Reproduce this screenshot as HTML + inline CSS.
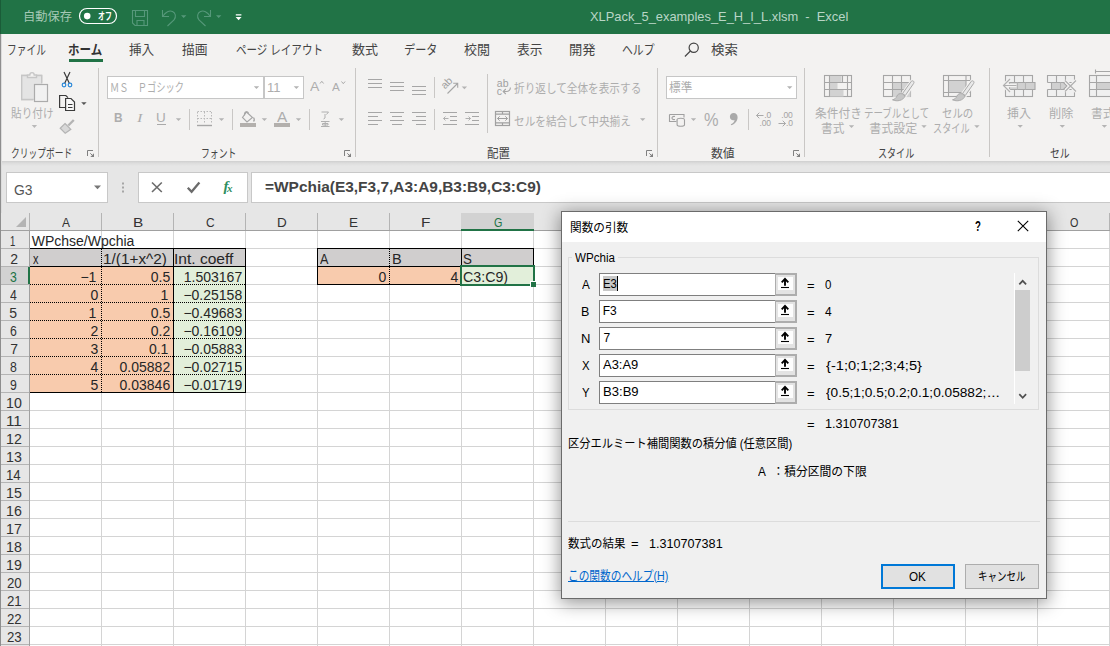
<!DOCTYPE html>
<html lang="ja"><head><meta charset="utf-8"><title>Excel</title>
<style>
*{box-sizing:border-box;margin:0;padding:0}
html,body{width:1110px;height:646px;overflow:hidden;background:#fff}
body{position:relative;font-family:"Liberation Sans","Noto Sans CJK JP",sans-serif;font-size:12px;color:#444}
.a{position:absolute}
.t{position:absolute;white-space:nowrap;line-height:1;transform-origin:0 0}
.vs{position:absolute;width:1px;background:#c9c7c5}
.bx{position:absolute;background:#fff;border:1px solid #c6c6c6}
.gv{position:absolute;top:231px;width:1px;height:415px;background:#d4d4d4}
.gh{position:absolute;left:30px;width:1080px;height:1px;background:#d4d4d4}
.hv{position:absolute;top:213px;width:1px;height:17px;background:#b4b4b4}
.hh{position:absolute;left:1px;width:28px;height:1px;background:#b4b4b4}
.o{position:absolute;background:#f8cbad}
.g{position:absolute;background:#e2efda}
.y{position:absolute;background:#d0cece}
.k{position:absolute;background:#000}
.dv{position:absolute;width:1px;background:repeating-linear-gradient(#000 0 1px,transparent 1px 2px)}
.dh{position:absolute;height:1px;background:repeating-linear-gradient(90deg,#000 0 1px,transparent 1px 2px)}
.in{position:absolute;left:599px;width:177px;height:23px;background:#fff;border:1px solid #7f7f7f}
.ib{position:absolute;left:775px;width:22px;height:23px;background:#e3e3e3;border:solid #adadad;border-width:2px 2px 2px 1px}
</style></head>
<body>
<!-- GRID -->
<div class="gv" style="left:101px"></div><div class="gv" style="left:173px"></div><div class="gv" style="left:245px"></div><div class="gv" style="left:317px"></div><div class="gv" style="left:389px"></div><div class="gv" style="left:461px"></div><div class="gv" style="left:533px"></div><div class="gv" style="left:605px"></div><div class="gv" style="left:677px"></div><div class="gv" style="left:749px"></div><div class="gv" style="left:821px"></div><div class="gv" style="left:893px"></div><div class="gv" style="left:965px"></div><div class="gv" style="left:1037px"></div><div class="gv" style="left:1109px"></div>
<div class="gh" style="top:248px"></div><div class="gh" style="top:266px"></div><div class="gh" style="top:284px"></div><div class="gh" style="top:302px"></div><div class="gh" style="top:320px"></div><div class="gh" style="top:338px"></div><div class="gh" style="top:356px"></div><div class="gh" style="top:374px"></div><div class="gh" style="top:392px"></div><div class="gh" style="top:410px"></div><div class="gh" style="top:428px"></div><div class="gh" style="top:446px"></div><div class="gh" style="top:464px"></div><div class="gh" style="top:482px"></div><div class="gh" style="top:500px"></div><div class="gh" style="top:518px"></div><div class="gh" style="top:536px"></div><div class="gh" style="top:554px"></div><div class="gh" style="top:572px"></div><div class="gh" style="top:590px"></div><div class="gh" style="top:608px"></div><div class="gh" style="top:626px"></div><div class="gh" style="top:644px"></div>
<div class="a" style="left:0;top:213px;width:1110px;height:18px;background:#e6e6e6;border-bottom:1px solid #a0a0a0"></div>
<div class="a" style="left:0;top:231px;width:30px;height:415px;background:#e6e6e6;border-right:1px solid #a0a0a0"></div>
<div class="hv" style="left:29px"></div><div class="hv" style="left:101px"></div><div class="hv" style="left:173px"></div><div class="hv" style="left:245px"></div><div class="hv" style="left:317px"></div><div class="hv" style="left:389px"></div><div class="hv" style="left:461px"></div><div class="hv" style="left:533px"></div><div class="hv" style="left:605px"></div><div class="hv" style="left:677px"></div><div class="hv" style="left:749px"></div><div class="hv" style="left:821px"></div><div class="hv" style="left:893px"></div><div class="hv" style="left:965px"></div><div class="hv" style="left:1037px"></div><div class="hv" style="left:1109px"></div>
<div class="hh" style="top:248px"></div><div class="hh" style="top:266px"></div><div class="hh" style="top:284px"></div><div class="hh" style="top:302px"></div><div class="hh" style="top:320px"></div><div class="hh" style="top:338px"></div><div class="hh" style="top:356px"></div><div class="hh" style="top:374px"></div><div class="hh" style="top:392px"></div><div class="hh" style="top:410px"></div><div class="hh" style="top:428px"></div><div class="hh" style="top:446px"></div><div class="hh" style="top:464px"></div><div class="hh" style="top:482px"></div><div class="hh" style="top:500px"></div><div class="hh" style="top:518px"></div><div class="hh" style="top:536px"></div><div class="hh" style="top:554px"></div><div class="hh" style="top:572px"></div><div class="hh" style="top:590px"></div><div class="hh" style="top:608px"></div><div class="hh" style="top:626px"></div><div class="hh" style="top:644px"></div>
<div class="a" style="left:16px;top:217px;width:0;height:0;border-left:10px solid transparent;border-bottom:10px solid #b4b4b4"></div>
<div class="a" style="left:461px;top:213px;width:73px;height:18px;background:#d2d2d2;border-bottom:2px solid #217346"></div>
<div class="a" style="left:1px;top:267px;width:29px;height:17px;background:#d2d2d2;border-right:2px solid #217346"></div>
<div class="y" style="left:30px;top:249px;width:215px;height:17px"></div><div class="o" style="left:30px;top:267px;width:143px;height:125px"></div><div class="g" style="left:174px;top:267px;width:71px;height:125px"></div><div class="y" style="left:318px;top:249px;width:215px;height:17px"></div><div class="o" style="left:318px;top:267px;width:143px;height:17px"></div><div class="g" style="left:462px;top:267px;width:71px;height:17px"></div>
<div class="t" style="left:61.85px;top:216px;font-size:13px;color:#333;transform:scaleX(0.922);">A</div>
<div class="t" style="left:132.66px;top:216px;font-size:13px;color:#333;transform:scaleX(1.186);">B</div>
<div class="t" style="left:205.85px;top:216px;font-size:13px;color:#333;transform:scaleX(0.922);">C</div>
<div class="t" style="left:276.81px;top:216px;font-size:13px;color:#333;transform:scaleX(1.037);">D</div>
<div class="t" style="left:348.81px;top:216px;font-size:13px;color:#333;transform:scaleX(1.037);">E</div>
<div class="t" style="left:420.66px;top:216px;font-size:13px;color:#333;transform:scaleX(1.186);">F</div>
<div class="t" style="left:493.85px;top:216px;font-size:13px;color:#217346;transform:scaleX(0.830);">G</div>
<div class="t" style="left:564.81px;top:216px;font-size:13px;color:#333;transform:scaleX(1.037);">H</div>
<div class="t" style="left:639.5px;top:216px;font-size:13px;color:#333;transform:scaleX(1.250);">I</div>
<div class="t" style="left:710.75px;top:216px;font-size:13px;color:#333;transform:scaleX(1.083);">J</div>
<div class="t" style="left:780.81px;top:216px;font-size:13px;color:#333;transform:scaleX(1.037);">K</div>
<div class="t" style="left:852.8px;top:216px;font-size:13px;color:#333;transform:scaleX(1.300);">L</div>
<div class="t" style="left:924.19px;top:216px;font-size:13px;color:#333;transform:scaleX(1.056);">M</div>
<div class="t" style="left:996.81px;top:216px;font-size:13px;color:#333;transform:scaleX(1.037);">N</div>
<div class="t" style="left:1069.85px;top:216px;font-size:13px;color:#333;transform:scaleX(0.830);">O</div>
<div class="t" style="left:10.14px;top:234px;font-size:14px;color:#333;transform:scaleX(0.680);">1</div>
<div class="t" style="left:10.2px;top:252px;font-size:14px;color:#333;">2</div>
<div class="t" style="left:10.2px;top:270px;font-size:14px;color:#217346;transform:scaleX(0.875);">3</div>
<div class="t" style="left:10.2px;top:288px;font-size:14px;color:#333;transform:scaleX(0.875);">4</div>
<div class="t" style="left:9.2px;top:306px;font-size:14px;color:#333;">5</div>
<div class="t" style="left:10.2px;top:324px;font-size:14px;color:#333;transform:scaleX(0.875);">6</div>
<div class="t" style="left:10.2px;top:342px;font-size:14px;color:#333;">7</div>
<div class="t" style="left:10.2px;top:360px;font-size:14px;color:#333;transform:scaleX(0.875);">8</div>
<div class="t" style="left:10.2px;top:378px;font-size:14px;color:#333;transform:scaleX(0.875);">9</div>
<div class="t" style="left:6.19px;top:396px;font-size:14px;color:#333;transform:scaleX(1.014);">10</div>
<div class="t" style="left:6.11px;top:414px;font-size:14px;color:#333;transform:scaleX(1.092);">11</div>
<div class="t" style="left:6.19px;top:432px;font-size:14px;color:#333;transform:scaleX(1.014);">12</div>
<div class="t" style="left:6.19px;top:450px;font-size:14px;color:#333;transform:scaleX(1.014);">13</div>
<div class="t" style="left:6.25px;top:468px;font-size:14px;color:#333;transform:scaleX(0.947);">14</div>
<div class="t" style="left:6.19px;top:486px;font-size:14px;color:#333;transform:scaleX(1.014);">15</div>
<div class="t" style="left:6.19px;top:504px;font-size:14px;color:#333;transform:scaleX(1.014);">16</div>
<div class="t" style="left:6.19px;top:522px;font-size:14px;color:#333;transform:scaleX(1.014);">17</div>
<div class="t" style="left:6.19px;top:540px;font-size:14px;color:#333;transform:scaleX(1.014);">18</div>
<div class="t" style="left:6.19px;top:558px;font-size:14px;color:#333;transform:scaleX(1.014);">19</div>
<div class="t" style="left:7.2px;top:576px;font-size:14px;color:#333;transform:scaleX(0.947);">20</div>
<div class="t" style="left:7.2px;top:594px;font-size:14px;color:#333;transform:scaleX(0.947);">21</div>
<div class="t" style="left:7.2px;top:612px;font-size:14px;color:#333;transform:scaleX(0.947);">22</div>
<div class="t" style="left:7.2px;top:630px;font-size:14px;color:#333;transform:scaleX(0.947);">23</div>
<div class="t" style="left:31.7px;top:234px;font-size:14px;color:#262626;">WPchse/Wpchia</div>
<div class="t" style="left:32.5px;top:252px;font-size:14px;color:#262626;transform:scaleX(0.786);">x</div>
<div class="t" style="left:103.1px;top:252px;font-size:14px;color:#262626;transform:scaleX(1.096);">1/(1+x^2)</div>
<div class="t" style="left:174.19px;top:252px;font-size:14px;color:#262626;transform:scaleX(1.111);">Int. coeff</div>
<div class="t" style="left:320px;top:252px;font-size:14px;color:#262626;transform:scaleX(0.900);">A</div>
<div class="t" style="left:391.96px;top:252px;font-size:14px;color:#262626;transform:scaleX(1.038);">B</div>
<div class="t" style="left:462.75px;top:252px;font-size:14px;color:#262626;transform:scaleX(0.950);">S</div>
<div class="t" style="left:-53.6px;width:150px;text-align:right;transform-origin:100% 0;top:270px;font-size:14px;color:#262626;">−1</div>
<div class="t" style="left:20.2px;width:150px;text-align:right;transform-origin:100% 0;top:270px;font-size:14px;color:#262626;">0.5</div>
<div class="t" style="left:92.2px;width:150px;text-align:right;transform-origin:100% 0;top:270px;font-size:14px;color:#262626;">1.503167</div>
<div class="t" style="left:-51.8px;width:150px;text-align:right;transform-origin:100% 0;top:288px;font-size:14px;color:#262626;">0</div>
<div class="t" style="left:18.4px;width:150px;text-align:right;transform-origin:100% 0;top:288px;font-size:14px;color:#262626;">1</div>
<div class="t" style="left:92.2px;width:150px;text-align:right;transform-origin:100% 0;top:288px;font-size:14px;color:#262626;">−0.25158</div>
<div class="t" style="left:-53.6px;width:150px;text-align:right;transform-origin:100% 0;top:306px;font-size:14px;color:#262626;">1</div>
<div class="t" style="left:20.2px;width:150px;text-align:right;transform-origin:100% 0;top:306px;font-size:14px;color:#262626;">0.5</div>
<div class="t" style="left:92.2px;width:150px;text-align:right;transform-origin:100% 0;top:306px;font-size:14px;color:#262626;">−0.49683</div>
<div class="t" style="left:-51.8px;width:150px;text-align:right;transform-origin:100% 0;top:324px;font-size:14px;color:#262626;">2</div>
<div class="t" style="left:20.2px;width:150px;text-align:right;transform-origin:100% 0;top:324px;font-size:14px;color:#262626;">0.2</div>
<div class="t" style="left:92.2px;width:150px;text-align:right;transform-origin:100% 0;top:324px;font-size:14px;color:#262626;">−0.16109</div>
<div class="t" style="left:-51.8px;width:150px;text-align:right;transform-origin:100% 0;top:342px;font-size:14px;color:#262626;">3</div>
<div class="t" style="left:18.4px;width:150px;text-align:right;transform-origin:100% 0;top:342px;font-size:14px;color:#262626;">0.1</div>
<div class="t" style="left:92.2px;width:150px;text-align:right;transform-origin:100% 0;top:342px;font-size:14px;color:#262626;">−0.05883</div>
<div class="t" style="left:-51.8px;width:150px;text-align:right;transform-origin:100% 0;top:360px;font-size:14px;color:#262626;">4</div>
<div class="t" style="left:20.2px;width:150px;text-align:right;transform-origin:100% 0;top:360px;font-size:14px;color:#262626;">0.05882</div>
<div class="t" style="left:92.2px;width:150px;text-align:right;transform-origin:100% 0;top:360px;font-size:14px;color:#262626;">−0.02715</div>
<div class="t" style="left:-51.8px;width:150px;text-align:right;transform-origin:100% 0;top:378px;font-size:14px;color:#262626;">5</div>
<div class="t" style="left:20.2px;width:150px;text-align:right;transform-origin:100% 0;top:378px;font-size:14px;color:#262626;">0.03846</div>
<div class="t" style="left:92.2px;width:150px;text-align:right;transform-origin:100% 0;top:378px;font-size:14px;color:#262626;">−0.01719</div>
<div class="t" style="left:236.2px;width:150px;text-align:right;transform-origin:100% 0;top:270px;font-size:14px;color:#262626;">0</div>
<div class="t" style="left:308.2px;width:150px;text-align:right;transform-origin:100% 0;top:270px;font-size:14px;color:#262626;">4</div>
<div class="t" style="left:463.3px;top:270px;font-size:14px;color:#262626;transform:scaleX(1.016);">C3:C9)</div>
<!-- GRID BORDERS -->
<div class="k" style="left:30px;top:248px;width:216px;height:1px"></div><div class="k" style="left:30px;top:266px;width:216px;height:1px"></div><div class="k" style="left:30px;top:392px;width:216px;height:1px"></div><div class="k" style="left:173px;top:248px;width:1px;height:145px"></div><div class="k" style="left:245px;top:248px;width:1px;height:145px"></div><div class="dv" style="left:101px;top:249px;height:143px"></div><div class="dh" style="left:30px;top:284px;width:215px"></div><div class="dh" style="left:30px;top:302px;width:215px"></div><div class="dh" style="left:30px;top:320px;width:215px"></div><div class="dh" style="left:30px;top:338px;width:215px"></div><div class="dh" style="left:30px;top:356px;width:215px"></div><div class="dh" style="left:30px;top:374px;width:215px"></div><div class="k" style="left:317px;top:248px;width:217px;height:1px"></div><div class="k" style="left:317px;top:266px;width:217px;height:1px"></div><div class="k" style="left:317px;top:284px;width:217px;height:1px"></div><div class="k" style="left:317px;top:248px;width:1px;height:37px"></div><div class="k" style="left:461px;top:248px;width:1px;height:37px"></div><div class="k" style="left:533px;top:248px;width:1px;height:37px"></div><div class="dv" style="left:389px;top:249px;height:35px"></div><div class="a" style="left:460px;top:265px;width:75px;height:21px;border:2px solid #217346"></div><div class="a" style="left:530px;top:281px;width:6px;height:6px;background:#217346;border-left:1px solid #fff;border-top:1px solid #fff"></div>
<!-- TOP CHROME -->
<div class="a" style="left:0;top:161px;width:1110px;height:52px;background:#e6e6e6"></div>
<div class="a" style="left:0;top:161px;width:1110px;height:5px;background:linear-gradient(#cfcfcf,#dcdcdc 40%,#e6e6e6)"></div>
<div class="a" style="left:0;top:34px;width:1110px;height:127px;background:#f3f2f1"></div>
<div class="a" style="left:0;top:0;width:1110px;height:34px;background:#217346"></div>
<div class="a" style="left:0;top:0;width:1px;height:34px;background:#1a5c38"></div>
<div class="a" style="left:0;top:34px;width:1px;height:612px;background:#8e8e8e"></div>
<div class="a" style="left:1px;top:34px;width:1px;height:179px;background:#dcdcdc"></div>
<div class="a" style="left:69px;top:59px;width:34px;height:3px;background:#217346"></div>

<!-- title bar icons -->
<svg class="a" style="left:0;top:0" width="260" height="34" viewBox="0 0 260 34" fill="none">
  <rect x="79.500" y="8.500" width="37" height="15" rx="7.500" stroke="#fff" stroke-width="1.200"/>
  <circle cx="87.200" cy="16.100" r="3.300" fill="#fff"/>
  <g stroke="#56987a" stroke-width="1.100">
    <path d="M132.500 10.500h15v15h-12.500l-2.500-2.500z"/>
    <path d="M135.500 10.500v6h9v-6M137 25.500v-5h7v5"/>
    <path d="M162.500 10v6.500h6.500"/>
    <path d="M163 16c2.500-4 6.500-6 9.500-4.500s4 5 1.500 8.500l-6.500 6"/>
    <path d="M210.500 10v6.500h-6.500"/>
    <path d="M210 16c-2.500-4-6.500-6-9.500-4.500s-4 5-1.500 8.500l6.500 6"/>
  </g>
  <path d="M181 15.200h5.400l-2.700 2.800z M216 15.200h5.400l-2.700 2.800z" fill="#56987a"/>
  <path d="M235.800 14.200h5.600v1.300h-5.600z M235.600 17h6l-3 3.200z" fill="#fff"/>
</svg>
<!-- search icon -->
<svg class="a" style="left:683px;top:41px" width="18" height="18" viewBox="0 0 18 18" fill="none" stroke="#444" stroke-width="1.200"><circle cx="10.700" cy="6.700" r="4.600"/><path d="M7.400 10L1.900 15.500"/></svg>

<!-- group separators -->
<div class="vs" style="left:98px;top:68px;height:89px"></div>
<div class="vs" style="left:355px;top:68px;height:89px"></div>
<div class="vs" style="left:657px;top:68px;height:89px"></div>
<div class="vs" style="left:804px;top:68px;height:89px"></div>
<div class="vs" style="left:989px;top:68px;height:89px"></div>
<div class="vs" style="left:189px;top:109px;height:21px"></div>
<div class="vs" style="left:232px;top:109px;height:21px"></div>
<div class="vs" style="left:309px;top:109px;height:21px"></div>
<div class="vs" style="left:434px;top:77px;height:21px"></div>
<div class="vs" style="left:434px;top:109px;height:21px"></div>
<div class="vs" style="left:487px;top:74px;height:59px"></div>
<div class="vs" style="left:748px;top:109px;height:21px"></div>

<!-- combo boxes -->
<div class="bx" style="left:107px;top:76px;width:157px;height:23px"></div>
<div class="bx" style="left:264px;top:76px;width:40px;height:23px"></div>
<div class="bx" style="left:666px;top:76px;width:131px;height:23px"></div>

<!-- formula bar boxes -->
<div class="bx" style="left:6px;top:172px;width:102px;height:31px;border-color:#c8c8c8"></div>
<div class="bx" style="left:138px;top:172px;width:110px;height:31px;border-color:#c8c8c8"></div>
<div class="bx" style="left:251px;top:172px;width:870px;height:31px;border-color:#c8c8c8"></div>
<!-- RIBBON ICONS (page coordinates) -->
<svg class="a" style="left:0;top:0" width="1110" height="213" viewBox="0 0 1110 213" fill="none">
  <!-- paste -->
  <g stroke="#c6c6c6" stroke-width="1.400">
    <path d="M27 75.500h-5.300v24h11.300M36.500 75.500h5v7" fill="#e6e6e6"/>
    <path d="M21.700 75.500h20v24h-20z" fill="#e4e4e4" stroke="none"/>
    <path d="M27 75.500h-5.300v24h12M36.500 75.500h5.200v8"/>
    <path d="M27.500 77.500v-2.500h2.300c0-3.200 4.400-3.200 4.400 0h2.300v2.500z" fill="#f3f2f1"/>
  </g>
  <rect x="34.500" y="84.500" width="13" height="17" fill="#f1f1f1" stroke="#ababab" stroke-width="1.200"/>
  <path d="M31.700 125h5.400l-2.700 2.900z" fill="#b9b9b9"/>
  <!-- scissors -->
  <path d="M64 72l5.300 11.200M70 72l-5.300 11.200" stroke="#3b3b3b" stroke-width="1.200"/>
  <circle cx="64" cy="85" r="1.800" stroke="#2b88d8" stroke-width="1.200"/>
  <circle cx="70" cy="85" r="1.800" stroke="#2b88d8" stroke-width="1.200"/>
  <!-- copy -->
  <g stroke="#3b3b3b" stroke-width="1.200">
    <path d="M65 107.500h-5.400v-12h6.200l2.200 2.200"/>
    <path d="M65.600 98.500h5.400l3.500 3.500v8.500h-8.900z" fill="#f8f8f8"/>
    <path d="M68 104.500h4.500M68 107.500h4.500" stroke-width="1"/>
  </g>
  <path d="M81.200 102.200h5.400l-2.700 2.900z" fill="#555"/>
  <!-- format painter -->
  <g stroke="#b4b4b4" stroke-width="1.200">
    <path d="M73.800 120l-5.500 5.500" stroke-width="2.400"/>
    <path d="M65 123.500l5.800 5.800l-5.600 3.900l-5-5z" fill="#d8d8d8"/>
  </g>
  <!-- dialog launchers -->
  <g stroke="#808080" stroke-width="1" fill="#808080">
    <path d="M87.5 156v-5.500h5.500M90.3 153.300l2.500 2.500" fill="none"/><path d="M94 153.300v3.700h-3.700z" stroke="none"/>
    <path d="M344.5 156v-5.500h5.500M347.3 153.300l2.500 2.500" fill="none"/><path d="M351 153.300v3.700h-3.700z" stroke="none"/>
    <path d="M646.5 156v-5.500h5.500M649.3 153.300l2.500 2.500" fill="none"/><path d="M653 153.300v3.700h-3.700z" stroke="none"/>
    <path d="M793.5 156v-5.500h5.500M796.3 153.300l2.500 2.500" fill="none"/><path d="M800 153.300v3.700h-3.700z" stroke="none"/>
  </g>
  <!-- combo arrows + small dropdown arrows (disabled) -->
  <path fill="#b4b4b4" d="M253.800 86.200h5.400l-2.700 2.800z M293.700 86.200h5.400l-2.700 2.800z M787 86.200h5.400l-2.700 2.800z M175.800 118.200h5.400l-2.700 2.800z M218.800 118.200h5.400l-2.700 2.800z M261.700 118.200h5.400l-2.700 2.800z M295.800 118.200h5.400l-2.700 2.800z M338.700 118.200h5.400l-2.700 2.800z M461.700 86.500h5.400l-2.700 2.800z M640 118.200h5.400l-2.700 2.800z M690.800 118.200h5.400l-2.700 2.800z M848.800 125.300h5.400l-2.700 2.800z M921.300 125.300h5.400l-2.700 2.800z M974.200 125.300h5.400l-2.700 2.800z M1017.500 125h5.400l-2.700 2.800z M1059.600 125h5.400l-2.700 2.800z M1101.700 125h5.400l-2.700 2.800z"/>
  <!-- grow/shrink carets, underline for U -->
  <g stroke="#a9a9a9" stroke-width="1">
    <path d="M320 83.500l1.800-2.200l1.800 2.200M341.500 81.500l1.800 2.200l1.800-2.200"/>
    <path d="M157 124.500h9"/>
  </g>
  <!-- borders icon -->
  <g stroke="#b9b9b9" stroke-width="1">
    <path d="M197.500 111.500h14M197.500 118.500h14M197.500 112v11M204.500 112v11M211.500 112v11" stroke-dasharray="1.500 1.500"/>
    <path d="M197 125.500h15" stroke="#a6a6a6" stroke-width="1.400"/>
  </g>
  <!-- fill colour -->
  <rect x="240" y="123" width="16" height="4" fill="#b3b0ad"/>
  <g stroke="#a6a6a6" stroke-width="1.100">
    <path d="M246.500 112l6 5.500l-5.500 4.500l-4.500-4.500z" fill="#f3f2f1"/>
    <path d="M244.500 115.500c-.5-4 3.500-5 4-2"/>
    <path d="M253.500 117.500c1 1.500 1.500 2.500 0 4" stroke-width="1.300"/>
  </g>
  <!-- font colour bar -->
  <rect x="274" y="123" width="16" height="4" fill="#b3b0ad"/>
  <!-- phonetic -->
  <g stroke="#b0b0b0" stroke-width="1">
    <path d="M321.500 112h7l-2 2.500M325 114v4l-1.500 1"/>
    <path d="M321 121.500h8.500M321 126.500h8.500M322.500 123.500h5.500v1.500h-5.500zM325.200 121.500v5"/>
  </g>
  <!-- vertical align icons -->
  <g stroke="#a6a6a6" stroke-width="1.200">
    <path d="M368 79.500h14M368 83.500h14M368 87.500h14"/>
    <path d="M390 82.500h14M390 86.500h14M390 90.500h14"/>
    <path d="M412 86.500h14M412 90.500h14M412 94.500h14"/>
    <path d="M368 112.500h14M368 116.500h10M368 120.500h14M368 124.500h10"/>
    <path d="M390 112.500h14M392 116.500h10M390 120.500h14M392 124.500h10"/>
    <path d="M412 112.500h14M416 116.500h10M412 120.500h14M416 124.500h10"/>
    <path d="M443 112.500h14M450 116.500h7M450 120.500h7M443 124.500h14"/>
    <path d="M465 112.500h14M472 116.500h7M472 120.500h7M465 124.500h14"/>
  </g>
  <g stroke="#b0b0b0" stroke-width="1">
    <path d="M443.500 118.500h5M445.500 116.500l-2 2l2 2"/>
    <path d="M465.500 118.500h5M468.500 116.500l2 2l-2 2"/>
  </g>
  <!-- orientation -->
  <g stroke="#a6a6a6" stroke-width="1.100">
    <path d="M447.500 93.500l10-10M453.200 83.300h4.500v4.500"/>
  </g>
  <text x="0" y="0" transform="translate(445 89.500) rotate(-45)" font-size="10.500" fill="#a0a0a0" font-family="Liberation Sans, sans-serif" letter-spacing="-.3">ab</text>
  <!-- wrap text -->
  <text x="496.800" y="87.300" font-size="10.500" fill="#a0a0a0" font-family="Liberation Sans, sans-serif" letter-spacing="0">ab</text>
  <text x="496.800" y="94.600" font-size="10.500" fill="#a0a0a0" font-family="Liberation Sans, sans-serif">c</text>
  <g stroke="#a6a6a6" stroke-width="1.100">
    <path d="M510.300 87.500c.3 2.500-1.500 4-4 4h-3M505.800 89l-2.600 2.500l2.600 2.500"/>
  </g>
  <!-- merge & center -->
  <g stroke="#a0a0a0" stroke-width="1.200">
    <rect x="495.500" y="111.500" width="14" height="14"/>
    <path d="M495.500 114.200h14M495.500 122.800h14M502.500 111.500v2.700M502.500 122.800v2.700"/>
    <path d="M497.500 118.500h10M499.700 116.300l-2.200 2.200l2.200 2.200M505.300 116.300l2.200 2.200l-2.200 2.200" stroke-width="1"/>
  </g>
  <!-- currency -->
  <g stroke="#a0a0a0" stroke-width="1.100">
    <path d="M669.500 114.500h14.500v3M669.500 114.500v7h7"/>
    <path d="M675 116.500c-2-.5-3 .5-3 1.500s1 2 3 1.500"/>
    <ellipse cx="680.800" cy="119.800" rx="3.700" ry="1.500" fill="#f3f2f1"/>
    <path d="M677.100 119.800v5c0 2 7.400 2 7.400 0v-5" fill="#f3f2f1"/>
  </g>
  <!-- comma style -->
  <path d="M733.700 113c2.300 0 3.900 1.700 3.900 4.300c0 3.600-2.300 6.600-6.300 8l-.5-1c2.300-1.200 3.600-2.700 3.800-4.400c-.4.200-.8.300-1.400.3c-1.900 0-3.300-1.500-3.300-3.500c0-2.100 1.600-3.700 3.800-3.700z" fill="#a9a9a9"/>
  <!-- styles: conditional formatting -->
  <g stroke="#a6a6a6" stroke-width="1.100">
    <rect x="824.500" y="75.500" width="27" height="21" fill="#f3f2f1"/>
    <path d="M829.500 76h12v6.500h-12zM829.500 82.500h8v7h-8zM829.500 89.500h14v7h-14z" fill="#d2d2d2" stroke="none"/>
    <path d="M824.500 82.500h27.500M824.500 89.500h27.500M829.500 75.500v21.500M847.500 75.500v21.500M842.500 75.500v7"/>
  </g>
  <!-- table format -->
  <g stroke="#a6a6a6" stroke-width="1.100">
    <rect x="883.500" y="75.500" width="27" height="21" fill="#f3f2f1"/>
    <path d="M892.500 82.500h18v14.500h-18z" fill="#d2d2d2" stroke="none"/>
    <path d="M883.500 82.500h27M883.500 89.500h27M892.500 75.500v21.500M901.500 75.500v21.500"/>
    <path d="M911.8 80.500l-10.300 14.200l3.300 2.300l9.300 -13.300c1.500-2.500-.5-4.500-2.300-3.200z" fill="#f3f2f1" stroke="#f3f2f1" stroke-width="2.500"/>
    <path d="M911.3 81.300l-8.800 12.200l2.800 2l8.300-12c1.200-2-.8-3.500-2.300-2.200z" fill="#e9e9e9" stroke="#a9a9a9" stroke-width="1"/>
    <path d="M902.3 93.800c-2.800-.8-4.800.5-5.600 2.700c-.7 1.800-2 2.800-4.200 3.300c4.500 2 10.500 1 12.600-3.800z" fill="#c6c6c6" stroke="#ababab" stroke-width="1"/>
  </g>
  <!-- cell styles -->
  <g stroke="#a6a6a6" stroke-width="1.100">
    <rect x="943.500" y="75.500" width="27" height="21" fill="#f3f2f1"/>
    <path d="M948.500 80.500h17.500v12h-17.500z" fill="#d2d2d2" stroke="none"/>
    <path d="M943.500 80.500h27M943.500 92.500h27M948.500 75.500v21.500M966 75.500v21.500"/>
    <path d="M971.8 80.500l-10.300 14.200l3.300 2.300l9.300 -13.300c1.500-2.500-.5-4.500-2.300-3.200z" fill="#f3f2f1" stroke="#f3f2f1" stroke-width="2.500"/>
    <path d="M971.3 81.300l-8.800 12.200l2.800 2l8.300-12c1.200-2-.8-3.500-2.300-2.200z" fill="#e9e9e9" stroke="#a9a9a9" stroke-width="1"/>
    <path d="M962.3 93.800c-2.800-.8-4.800.5-5.600 2.700c-.7 1.800-2 2.800-4.200 3.300c4.500 2 10.500 1 12.600-3.800z" fill="#c6c6c6" stroke="#ababab" stroke-width="1"/>
  </g>
  <!-- cells: insert -->
  <g stroke="#a6a6a6" stroke-width="1.100">
    <rect x="1005.500" y="75.500" width="27" height="21" fill="#f0f0f0"/>
    <path d="M1005.500 82.500h27M1005.500 89.500h27M1014.500 75.500v21M1023.500 75.500v21"/>
    <path d="M1009.500 82.500h25.500v7h-25.500z" fill="#d0d0d0"/>
    <path d="M1017.500 82.500v7M1025.500 82.500v7" stroke="#b4b4b4"/>
    <path d="M1010 79l-6.500 6.500l6.500 6.500M1004 85.500h12.500" stroke="#f3f2f1" stroke-width="3.400"/>
    <path d="M1010 79l-6.500 6.500l6.500 6.500M1004 85.500h12.500" stroke="#b0b0b0" stroke-width="1.200"/>
  </g>
  <!-- cells: delete -->
  <g stroke="#a6a6a6" stroke-width="1.100">
    <path d="M1047.500 82.500v-7h27v7M1047.500 89.500v7h27v-7" fill="#f0f0f0"/>
    <path d="M1047.500 82.500h27M1047.500 89.500h27M1056.500 75.500v7M1065.500 75.500v7M1056.500 89.500v7M1065.500 89.500v7"/>
    <path d="M1051.500 82.500h12l3.500 3.500l-3.500 3.500h-12z" fill="#d0d0d0"/>
    <path d="M1060.500 82.500v7" stroke="#b4b4b4"/>
    <path d="M1065 80.500l11 11M1076 80.500l-11 11" stroke="#f3f2f1" stroke-width="3.200"/>
    <path d="M1065 80.500l11 11M1076 80.500l-11 11" stroke="#b0b0b0" stroke-width="1.200"/>
  </g>
  <!-- cells: format -->
  <g stroke="#a6a6a6" stroke-width="1.100">
    <rect x="1089.500" y="75.500" width="27" height="21" fill="#f0f0f0"/>
    <path d="M1097 82.500h13v7h-13z" fill="#d0d0d0" stroke="none"/>
    <path d="M1089.500 82.500h27M1089.500 89.500h27M1096.500 75.500v21M1096 71.500h15M1095.500 69.500v4"/>
  </g>
  <!-- name box arrow, dots, X, check -->
  <path d="M94 185.500h7l-3.500 3.700z" fill="#777"/>
  <path d="M122 183h2v2h-2zM122 187h2v2h-2zM122 191h2v2h-2z" fill="#a6a6a6" transform="translate(0 -.5)"/>
  <g stroke="#6b6b6b" stroke-width="1.600">
    <path d="M152 182.500l9.800 9.500M161.800 182.500l-9.800 9.500"/>
    <path d="M187.800 187.800l3.800 4l7.800-9.300" stroke-width="2.300"/>
  </g>
</svg>
<div class="t" style="left:223.500px;top:179px;font-size:15px;color:#2f8f5f;font-style:italic;font-weight:bold;font-family:'Liberation Serif',serif">f<span style="font-size:11px;position:relative;top:1px;left:-1.500px">x</span></div>
<svg class="a" style="left:750px;top:105px" width="50" height="28" viewBox="750 105 50 28" fill="#a3a3a3" font-family="Liberation Sans, sans-serif" font-size="8.500" letter-spacing="-.2">
  <text x="764.300" y="118.300">.0</text><text x="759.500" y="126.300">.00</text>
  <text x="781.300" y="118.300">.00</text><text x="786" y="126.300">.0</text>
  <path d="M756.500 115.500h7M759.300 112.700l-2.800 2.800l2.800 2.800M778.500 123.500h7M782.700 120.700l2.800 2.800l-2.800 2.800" fill="none" stroke="#a9a9a9" stroke-width="1"/>
</svg>
<div class="t" style="left:22.66px;top:11px;font-size:12px;color:#a5c9b5;transform:scaleX(1.022);">自動保存</div>
<div class="t" style="left:97.61px;top:12px;font-size:10px;color:#fff;font-weight:bold;transform:scaleX(0.694);">オフ</div>
<div class="t" style="left:590px;top:10px;font-size:13px;color:#b9d6c6;transform:scaleX(0.990);">XLPack_5_examples_E_H_I_L.xlsm&nbsp; -&nbsp; Excel</div>
<div class="t" style="left:7.21px;top:43px;font-size:13px;color:#444;transform:scaleX(0.747);">ファイル</div>
<div class="t" style="left:68.12px;top:43px;font-size:13px;color:#333;font-weight:bold;transform:scaleX(0.884);">ホーム</div>
<div class="t" style="left:129px;top:43px;font-size:13px;color:#444;transform:scaleX(0.969);">挿入</div>
<div class="t" style="left:182px;top:43px;font-size:13px;color:#444;transform:scaleX(0.981);">描画</div>
<div class="t" style="left:236.19px;top:43px;font-size:13px;color:#444;transform:scaleX(0.810);">ページ レイアウト</div>
<div class="t" style="left:352px;top:43px;font-size:13px;color:#444;">数式</div>
<div class="t" style="left:404.14px;top:43px;font-size:13px;color:#444;transform:scaleX(0.857);">データ</div>
<div class="t" style="left:464px;top:43px;font-size:13px;color:#444;">校閲</div>
<div class="t" style="left:517px;top:43px;font-size:13px;color:#444;transform:scaleX(0.981);">表示</div>
<div class="t" style="left:569.28px;top:43px;font-size:13px;color:#444;transform:scaleX(1.020);">開発</div>
<div class="t" style="left:622.47px;top:43px;font-size:13px;color:#444;transform:scaleX(0.834);">ヘルプ</div>
<div class="t" style="left:711.2px;top:43px;font-size:13px;color:#444;transform:scaleX(1.032);">検索</div>
<div class="t" style="left:11.27px;top:148px;font-size:12px;color:#444;transform:scaleX(0.728);">クリップボード</div>
<div class="t" style="left:201.46px;top:148px;font-size:12px;color:#444;transform:scaleX(0.736);">フォント</div>
<div class="t" style="left:486.7px;top:148px;font-size:12px;color:#444;transform:scaleX(0.958);">配置</div>
<div class="t" style="left:711.3px;top:148px;font-size:12px;color:#444;transform:scaleX(0.988);">数値</div>
<div class="t" style="left:878.44px;top:148px;font-size:12px;color:#444;transform:scaleX(0.755);">スタイル</div>
<div class="t" style="left:1049.98px;top:148px;font-size:12px;color:#444;transform:scaleX(0.822);">セル</div>
<div class="t" style="left:11.3px;top:108px;font-size:12px;color:#adadad;transform:scaleX(0.887);">貼り付け</div>
<div class="t" style="left:109.76px;top:82px;font-size:12px;color:#adadad;transform:scaleX(0.771);">ＭＳ　Ｐゴシック</div>
<div class="t" style="left:267px;top:81px;font-size:13px;color:#adadad;">11</div>
<div class="t" style="left:113.79px;top:111px;font-size:13px;color:#adadad;font-weight:bold;transform:scaleX(0.912);">B</div>
<div class="t" style="left:137px;top:111px;font-size:13px;color:#adadad;font-style:italic;font-family:'Liberation Serif',serif;transform:scaleX(1.260);">I</div>
<div class="t" style="left:156.46px;top:111px;font-size:13px;color:#adadad;transform:scaleX(1.038);">U</div>
<div class="t" style="left:310.3px;top:80px;font-size:13px;color:#adadad;transform:scaleX(1.078);">A</div>
<div class="t" style="left:332px;top:82px;font-size:11px;color:#adadad;transform:scaleX(1.062);">A</div>
<div class="t" style="left:276.5px;top:110px;font-size:14px;color:#adadad;transform:scaleX(1.100);">A</div>
<div class="t" style="left:514.2px;top:83px;font-size:12px;color:#adadad;transform:scaleX(0.886);">折り返して全体を表示する</div>
<div class="t" style="left:513.91px;top:116px;font-size:12px;color:#adadad;transform:scaleX(0.888);">セルを結合して中央揃え</div>
<div class="t" style="left:669.2px;top:82px;font-size:12px;color:#adadad;transform:scaleX(0.971);">標準</div>
<div class="t" style="left:703.7px;top:110px;font-size:19px;color:#adadad;transform:scaleX(0.859);">%</div>
<div class="t" style="left:815px;top:108px;font-size:12px;color:#adadad;transform:scaleX(0.978);">条件付き</div>
<div class="t" style="left:821.3px;top:123px;font-size:12px;color:#adadad;transform:scaleX(0.975);">書式</div>
<div class="t" style="left:864.21px;top:108px;font-size:12px;color:#adadad;transform:scaleX(0.786);">テーブルとして</div>
<div class="t" style="left:869.2px;top:123px;font-size:12px;color:#adadad;">書式設定</div>
<div class="t" style="left:941.63px;top:108px;font-size:12px;color:#adadad;transform:scaleX(0.868);">セルの</div>
<div class="t" style="left:933.44px;top:123px;font-size:12px;color:#adadad;transform:scaleX(0.762);">スタイル</div>
<div class="t" style="left:1007px;top:108px;font-size:12px;color:#adadad;transform:scaleX(0.992);">挿入</div>
<div class="t" style="left:1048.69px;top:108px;font-size:12px;color:#adadad;transform:scaleX(1.013);">削除</div>
<div class="t" style="left:1091.2px;top:108px;font-size:12px;color:#adadad;transform:scaleX(0.975);">書式</div>
<div class="t" style="left:13.5px;top:182px;font-size:15px;color:#555;transform:scaleX(0.925);">G3</div>
<div class="t" style="left:264.5px;top:180px;font-size:14px;color:#444;font-weight:bold;transform:scaleX(1.103);">=WPchia(E3,F3,7,A3:A9,B3:B9,C3:C9)</div>
<!-- DIALOG -->
<div class="a" style="left:561px;top:211px;width:486px;height:388px;background:#f0f0f0;border:1px solid #6b6b6b;box-shadow:0 3px 17px 1px rgba(0,0,0,.42)"></div>
<div class="a" style="left:562px;top:212px;width:484px;height:30px;background:#fff"></div>
<svg class="a" style="left:1017px;top:220px" width="12" height="12" viewBox="0 0 12 12" stroke="#000" stroke-width="1.100" fill="none"><path d="M.8.800l10.400 10.400M11.200.8l-10.400 10.400"/></svg>
<div class="a" style="left:568px;top:257px;width:471px;height:153px;border:1px solid #dcdcdc"></div>
<div class="a" style="left:572px;top:257px;width:46px;height:1px;background:#f0f0f0"></div>
<div class="in" style="top:273px"></div><div class="ib" style="top:273px"></div>
<div class="in" style="top:300px"></div><div class="ib" style="top:300px"></div>
<div class="in" style="top:327px"></div><div class="ib" style="top:327px"></div>
<div class="in" style="top:354px"></div><div class="ib" style="top:354px"></div>
<div class="in" style="top:381px"></div><div class="ib" style="top:381px"></div>
<div class="a" style="left:603px;top:276px;width:14px;height:15px;background:#c8c8c8"></div>
<div class="a" style="left:617px;top:276px;width:1px;height:15px;background:#000"></div>
<div class="a" style="left:1014px;top:273px;width:1px;height:131px;background:#fff"></div>
<div class="a" style="left:1015px;top:290px;width:15px;height:81px;background:#cdcdcd"></div>
<svg class="a" style="left:1014px;top:273px" width="17" height="131" viewBox="0 0 17 131" fill="none" stroke="#505050" stroke-width="1.700"><path d="M5.300 11.400l3.400-3.600l3.400 3.600M5.300 121.200l3.400 3.600l3.400-3.600"/></svg>
<svg class="a" style="left:0;top:0" width="1110" height="646" viewBox="0 0 1110 646" fill="none" stroke="#000">
  <path d="M781 277h15v13h-15z" transform="translate(-3 0)" fill="#fdfdfd" stroke="none"/>
  <path d="M781 304h15v13h-15z" transform="translate(-3 0)" fill="#fdfdfd" stroke="none"/>
  <path d="M781 331h15v13h-15z" transform="translate(-3 0)" fill="#fdfdfd" stroke="none"/>
  <path d="M781 358h15v13h-15z" transform="translate(-3 0)" fill="#fdfdfd" stroke="none"/>
  <path d="M781 385h15v13h-15z" transform="translate(-3 0)" fill="#fdfdfd" stroke="none"/>
  <path d="M785 279.3v6.500M781.700 282.3l3.300-3.400l3.300 3.400" stroke-width="1.900"/><path d="M781 287.5h8" stroke-width="1.100"/>
  <path d="M785 306.3v6.500M781.700 309.3l3.300-3.400l3.300 3.400" stroke-width="1.900"/><path d="M781 314.5h8" stroke-width="1.100"/>
  <path d="M785 333.3v6.500M781.700 336.3l3.300-3.400l3.300 3.400" stroke-width="1.900"/><path d="M781 341.5h8" stroke-width="1.100"/>
  <path d="M785 360.3v6.500M781.700 363.3l3.300-3.400l3.300 3.400" stroke-width="1.900"/><path d="M781 368.5h8" stroke-width="1.100"/>
  <path d="M785 387.3v6.500M781.700 390.3l3.300-3.400l3.300 3.400" stroke-width="1.900"/><path d="M781 395.5h8" stroke-width="1.100"/>
</svg>
<div class="a" style="left:568px;top:521px;width:472px;height:1px;background:#dcdcdc"></div>
<div class="a" style="left:881px;top:564px;width:74px;height:25px;background:#e1e1e1;border:2px solid #0078d7"></div>
<div class="a" style="left:965px;top:564px;width:74px;height:25px;background:#e1e1e1;border:1px solid #adadad"></div>
<div class="t" style="left:569.53px;top:222px;font-size:12px;color:#000;transform:scaleX(0.971);">関数の引数</div>
<div class="t" style="left:975.3px;top:219px;font-size:14px;color:#000;font-weight:bold;transform:scaleX(0.688);">?</div>
<div class="t" style="left:574.7px;top:252px;font-size:12px;color:#000;transform:scaleX(0.967);">WPchia</div>
<div class="t" style="left:582.2px;top:279px;font-size:12px;color:#000;transform:scaleX(0.975);">A</div>
<div class="t" style="left:602.56px;top:278px;font-size:12px;color:#000;transform:scaleX(0.943);">E3</div>
<div class="t" style="left:807.05px;top:282px;font-size:10px;color:#000;transform:scaleX(1.300);">=</div>
<div class="t" style="left:825.3px;top:279px;font-size:12px;color:#000;transform:scaleX(0.957);">0</div>
<div class="t" style="left:581.36px;top:306px;font-size:12px;color:#000;transform:scaleX(1.043);">B</div>
<div class="t" style="left:602.7px;top:305px;font-size:12px;color:#000;">F3</div>
<div class="t" style="left:807.05px;top:309px;font-size:10px;color:#000;transform:scaleX(1.300);">=</div>
<div class="t" style="left:825px;top:306px;font-size:12px;color:#000;">4</div>
<div class="t" style="left:581.11px;top:333px;font-size:12px;color:#000;transform:scaleX(1.086);">N</div>
<div class="t" style="left:603.5px;top:332px;font-size:12px;color:#000;">7</div>
<div class="t" style="left:807.05px;top:336px;font-size:10px;color:#000;transform:scaleX(1.300);">=</div>
<div class="t" style="left:825.3px;top:333px;font-size:12px;color:#000;transform:scaleX(1.067);">7</div>
<div class="t" style="left:582.2px;top:360px;font-size:12px;color:#000;transform:scaleX(0.950);">X</div>
<div class="t" style="left:602.8px;top:359px;font-size:12px;color:#000;transform:scaleX(1.078);">A3:A9</div>
<div class="t" style="left:807.05px;top:363px;font-size:10px;color:#000;transform:scaleX(1.300);">=</div>
<div class="t" style="left:825.8px;top:360px;font-size:12px;color:#000;transform:scaleX(1.218);">{-1;0;1;2;3;4;5}</div>
<div class="t" style="left:582.2px;top:387px;font-size:12px;color:#000;transform:scaleX(0.950);">Y</div>
<div class="t" style="left:602.61px;top:386px;font-size:12px;color:#000;transform:scaleX(1.090);">B3:B9</div>
<div class="t" style="left:807.05px;top:390px;font-size:10px;color:#000;transform:scaleX(1.300);">=</div>
<div class="t" style="left:825.8px;top:387px;font-size:12px;color:#000;transform:scaleX(1.139);">{0.5;1;0.5;0.2;0.1;0.05882;</div>
<div class="t" style="left:986.71px;top:387px;font-size:12px;color:#000;transform:scaleX(1.287);">...</div>
<div class="t" style="left:807.05px;top:421px;font-size:10px;color:#000;transform:scaleX(1.300);">=</div>
<div class="t" style="left:824.75px;top:418px;font-size:12px;color:#000;transform:scaleX(1.051);">1.310707381</div>
<div class="t" style="left:567.76px;top:438px;font-size:12px;color:#000;transform:scaleX(0.937);">区分エルミート補間関数の積分値 (任意区間)</div>
<div class="t" style="left:758.3px;top:466px;font-size:12px;color:#000;transform:scaleX(0.982);">A&nbsp; ：積分区間の下限</div>
<div class="t" style="left:568.3px;top:538px;font-size:12px;color:#000;transform:scaleX(0.958);">数式の結果</div>
<div class="t" style="left:631.2px;top:540px;font-size:10px;color:#000;transform:scaleX(1.300);">=</div>
<div class="t" style="left:648.65px;top:538px;font-size:12px;color:#000;transform:scaleX(1.051);">1.310707381</div>
<div class="t" style="left:568px;top:569px;font-size:13px;color:#0066cc;transform:scaleX(0.822);text-decoration:underline;text-underline-offset:1px">この関数のヘルプ(H)</div>
<div class="t" style="left:909.2px;top:571px;font-size:12px;color:#000;transform:scaleX(0.976);">OK</div>
<div class="t" style="left:977.51px;top:571px;font-size:12px;color:#000;transform:scaleX(0.792);">キャンセル</div>
</body></html>
